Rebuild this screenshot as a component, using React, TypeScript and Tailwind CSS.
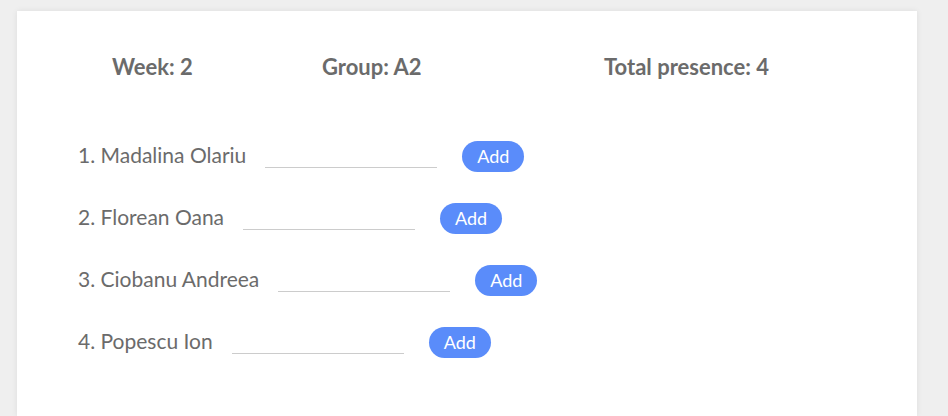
import React from "react";

const students = ["Madalina Olariu", "Florean Oana", "Ciobanu Andreea", "Popescu Ion"];

export default function App() {
  return (
    <div className="min-h-[416px] bg-[#efefef] pt-[11px] pl-[17px] font-['Lato',sans-serif] text-[#6b6b6b]">
      <div className="w-[900px] h-[405px] bg-white shadow-[0_0_6px_rgba(0,0,0,0.08)]">
        <div className="flex pt-[43px] pl-[95px] text-[22px] font-bold leading-[26px]">
          <span className="w-[210px]">Week: 2</span>
          <span className="w-[282px]">Group: A2</span>
          <span>Total presence: 4</span>
        </div>
        <div className="flex flex-col gap-[32px] pt-[61px] pl-[61px]">
          {students.map((name, i) => (
            <div key={name} className="flex items-center h-[30px]">
              <span className="text-[21px] leading-[24px] -mt-[2px]">
                {i + 1}. {name}
              </span>
              <input
                type="text"
                className="ml-[19px] w-[172px] h-[24px] border-b border-[#cccccc] outline-none"
              />
              <button className="ml-[25px] h-[31px] px-[15px] rounded-full bg-[#5a8cfa] text-white text-[18px] leading-none">
                Add
              </button>
            </div>
          ))}
        </div>
      </div>
    </div>
  );
}
